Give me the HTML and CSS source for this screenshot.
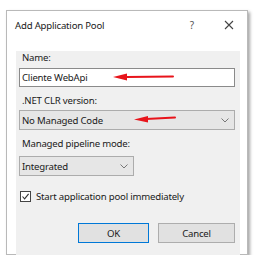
FILE: index.html
```html
<!DOCTYPE html>
<html lang="en">
<head>
    <meta charset="UTF-8">
    <title>Add Application Pool</title>
    <link rel="stylesheet" href="styles.css">
</head>
<body>

<div class="dialog">
    <!-- Title bar -->
    <div class="titlebar">
        <span class="title">Add Application Pool</span>
        <span class="help">?</span>
        <svg class="close" width="10" height="10" viewBox="0 0 10 10">
            <path d="M1 1 L9 9 M9 1 L1 9" stroke="#444" stroke-width="1.1"/>
        </svg>
    </div>

    <!-- Form panel -->
    <div class="panel">
        <div class="label first">Name:</div>
        <div class="textbox">Cliente WebApi</div>

        <div class="label">.NET CLR version:</div>
        <div class="combo wide">
            <span>No Managed Code</span>
            <svg width="8" height="5" viewBox="0 0 8 5"><path d="M0.5 0.5 L4 4 L7.5 0.5" fill="none" stroke="#777" stroke-width="1"/></svg>
        </div>

        <div class="label">Managed pipeline mode:</div>
        <div class="combo small">
            <span>Integrated</span>
            <svg width="8" height="5" viewBox="0 0 8 5"><path d="M0.5 0.5 L4 4 L7.5 0.5" fill="none" stroke="#777" stroke-width="1"/></svg>
        </div>

        <div class="check-row">
            <span class="checkbox">
                <svg width="9" height="9" viewBox="0 0 9 9"><path d="M1.5 4.5 L3.6 6.8 L7.6 1.8" fill="none" stroke="#333" stroke-width="1.1"/></svg>
            </span>
            <span>Start application pool immediately</span>
        </div>

        <div class="buttons">
            <button class="btn ok">OK</button>
            <button class="btn cancel">Cancel</button>
        </div>
    </div>
</div>

<!-- red annotation arrows -->
<svg class="arrow arrow-one" width="64" height="10" viewBox="0 0 64 10">
    <path d="M14 5 L61 4.5" stroke="#e8141b" stroke-width="2" stroke-linecap="round"/>
    <path d="M1 5 L15 1.5 L15 8.5 Z" fill="#e8141b"/>
</svg>
<svg class="arrow arrow-two" width="44" height="10" viewBox="0 0 44 10">
    <path d="M13 5 L42 3.5" stroke="#e8141b" stroke-width="2" stroke-linecap="round"/>
    <path d="M1 5.5 L15 2 L15 8.5 Z" fill="#e8141b"/>
</svg>

</body>
</html>
```

FILE: styles.css
```css
body {
    margin: 0;
    background-color: #fff;
    font-family: "Noto Sans", "Open Sans", sans-serif;
    font-size: 9.6px;
    letter-spacing: -0.2px;
    color: #1a1a1a;
}
.dialog {
    position: relative;
    margin: 10px 0 0 6px;
    width: 242px;
    height: 245px;
    box-sizing: border-box;
    background-color: #fff;
    border: 1px solid #b9b9b9;
    box-shadow: 2px 2px 3px rgba(0, 0, 0, 0.35);
}
.titlebar {
    display: flex;
    align-items: center;
    height: 28px;
    padding: 0 13px 0 8px;
}
.title {
    flex: 1;
}
.help {
    margin-right: 30px;
    color: #555;
    font-size: 10px;
}
.panel {
    margin: 0 7px 0 9px;
    height: 207px;
    box-sizing: border-box;
    background-color: #f0f0f0;
    padding: 0 5px 0 3px;
}
.label {
    padding-left: 3px;
    line-height: 13px;
    margin-top: 7px;
}
.label.first {
    margin-top: 12px;
}
.textbox {
    margin-top: 4px;
    height: 19px;
    box-sizing: border-box;
    background-color: #fff;
    border: 1px solid #8a8a8a;
    padding-left: 2px;
    line-height: 17px;
}
.combo {
    display: flex;
    align-items: center;
    justify-content: space-between;
    margin-top: 3px;
    height: 20px;
    box-sizing: border-box;
    background-color: #e6e6e6;
    border: 1px solid #acacac;
    padding: 0 5px 0 2px;
}
.combo.small {
    width: 115px;
    margin-top: 6px;
}
.check-row {
    display: flex;
    align-items: center;
    gap: 5px;
    margin-top: 14px;
    padding-left: 1px;
    line-height: 13px;
}
.checkbox {
    display: flex;
    align-items: center;
    justify-content: center;
    width: 11px;
    height: 11px;
    box-sizing: border-box;
    border: 1px solid #444;
    background-color: #fff;
}
.buttons {
    display: flex;
    justify-content: flex-end;
    gap: 9px;
    margin-top: 20px;
}
.btn {
    height: 20px;
    box-sizing: border-box;
    font-family: inherit;
    font-size: 9.6px;
    letter-spacing: -0.2px;
    color: #1a1a1a;
    background-color: #e1e1e1;
    border: 1px solid #adadad;
    padding: 0;
}
.btn.ok {
    width: 71px;
    border-color: #0078d7;
}
.btn.cancel {
    width: 77px;
}
.arrow {
    position: absolute;
}
.arrow-one {
    left: 112px;
    top: 72px;
}
.arrow-two {
    left: 133px;
    top: 114px;
}
```
